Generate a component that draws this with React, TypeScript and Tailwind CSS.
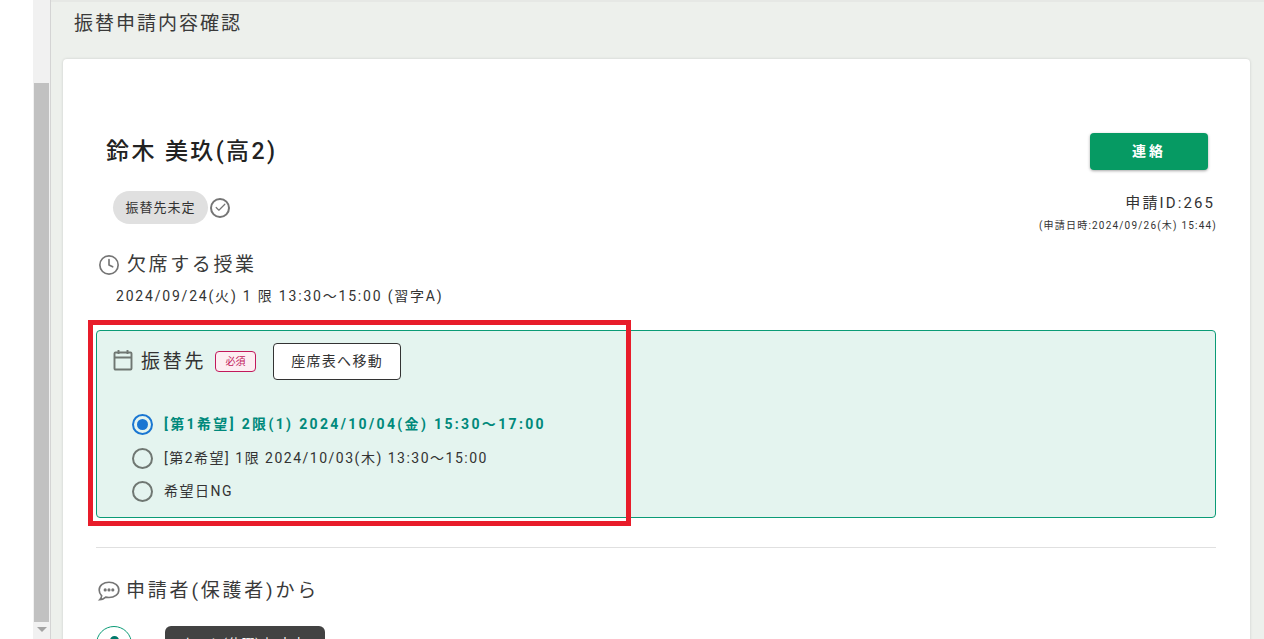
import { Check, Clock } from "lucide-react";

const sans = "font-['Roboto','Noto_Sans_CJK_JP',sans-serif]";

function RadioRow({ label, checked }: { label: string; checked?: boolean }) {
  return (
    <div className="flex h-[33.5px] items-center">
      <span
        className={
          "flex size-[21px] items-center justify-center rounded-full border-2 " +
          (checked ? "border-[#1976d2]" : "border-[#6f7772]")
        }
      >
        {checked && <span className="size-[11px] rounded-full bg-[#1976d2]" />}
      </span>
      <span
        className={
          "ml-[11px] text-[14px] " +
          (checked ? "font-bold tracking-[2.35px] text-[#00897b]" : "tracking-[1.5px] text-[#333333]")
        }
      >
        {label}
      </span>
    </div>
  );
}

export default function App() {
  return (
    <div className={"relative flex h-[639px] w-[1264px] overflow-hidden bg-white " + sans}>
      {/* page scrollbar */}
      <div className="ml-[33px] flex w-[18px] flex-col border-r border-[#d4d4d4] bg-[#f1f1f1]">
        <div className="mt-[83px] ml-[1px] h-[539px] w-[15px] bg-[#c1c1c1]" />
        <div className="ml-[4px] mt-[5px] h-0 w-0 border-x-[5px] border-t-[5px] border-x-transparent border-t-[#a3a3a3]" />
      </div>

      <main className="flex-1 border-t-2 border-[#e6e8e5] bg-[#edf0ec] pl-3 pr-[14px]">
        <h1 className="ml-[11px] mt-[9px] h-[48px] text-[19px] leading-[26px] tracking-[2px] text-[#3a3a3a]">
          振替申請内容確認
        </h1>

        <section className="h-[600px] rounded-t-[4px] bg-white pl-[33px] pr-[34px] shadow-[0_0_3px_rgba(0,0,0,0.15)]">
          <div className="flex h-[186px] items-start justify-between pt-[74px]">
            <div>
              <div className="ml-[10px] mt-[1px] text-[23px] font-medium leading-[36px] tracking-[2.4px] text-[#222222]">
                鈴木 美玖(高2)
              </div>
              <div className="ml-[17px] mt-[21px] flex items-center gap-[2px]">
                <span className="flex h-[33px] w-[95px] items-center justify-center rounded-full bg-[#e0e0e0] text-[13px] tracking-[1px] text-[#333333]">
                  振替先未定
                </span>
                <span className="flex size-[20px] items-center justify-center rounded-full border-2 border-[#757575]">
                  <Check size={13} strokeWidth={2.2} className="text-[#757575]" />
                </span>
              </div>
            </div>
            <div className="-mr-[1px] flex flex-col items-end">
              <button className="mr-[9px] h-[37px] w-[118px] rounded-[4px] bg-[#069a63] text-[14px] font-bold tracking-[3px] text-white shadow-[0_1px_3px_rgba(0,0,0,0.35)]">
                連絡
              </button>
              <div className="mr-[2px] mt-[22px] text-[15px] leading-[22px] tracking-[2.1px] text-[#333333]">
                申請ID:265
              </div>
              <div className="mt-[5px] text-[10px] leading-[14px] tracking-[1.2px] text-[#333333]">
                (申請日時:2024/09/26(木) 15:44)
              </div>
            </div>
          </div>

          <div className="mt-[6px] flex items-center">
            <Clock size={22} strokeWidth={1.8} className="ml-[2px] text-[#757575]" />
            <span className="ml-[7px] text-[19px] leading-[28px] tracking-[2.6px] text-[#3a3a3a]">欠席する授業</span>
          </div>
          <div className="ml-[20px] mt-[6px] text-[14px] leading-[22px] tracking-[1.8px] text-[#333333]">
            2024/09/24(火) 1 限 13:30〜15:00 (習字A)
          </div>

          <div className="mt-[23px] h-[188px] rounded-[4px] border border-[#0a9b76] bg-[#e4f4ef] pl-[16px]">
            <div className="flex items-center pt-[12px]">
              <svg width="20" height="22" viewBox="0 0 20 22" fill="none" stroke="#6f7772" strokeWidth="1.9" className="-mt-[3px]">
                <rect x="1.5" y="3.5" width="17" height="17" rx="1" />
                <path d="M1.5 8.5h17M5.5 1v4M14.5 1v4" />
              </svg>
              <span className="ml-[8px] text-[19px] leading-[36px] tracking-[2.7px] text-[#333333]">振替先</span>
              <span className="ml-[9px] flex h-[21px] w-[41px] items-center justify-center rounded-[4px] border border-[#c2185b] bg-[#fdeef2] text-[10px] text-[#c2185b]">
                必須
              </span>
              <button className="ml-[17px] h-[37px] w-[128px] rounded-[4px] border border-[#333333] bg-white text-[14px] tracking-[1.3px] text-[#333333]">
                座席表へ移動
              </button>
            </div>
            <div className="ml-[19px] mt-[28px]">
              <RadioRow checked label="[第1希望] 2限(1) 2024/10/04(金) 15:30〜17:00" />
              <RadioRow label="[第2希望] 1限 2024/10/03(木) 13:30〜15:00" />
              <RadioRow label="希望日NG" />
            </div>
          </div>

          <hr className="mt-[29px] border-[#e0e0e0]" />

          <div className="mt-[29px] flex items-center">
            <svg width="24" height="22" viewBox="0 0 22 20" fill="none" stroke="#757575" strokeWidth="1.5" className="ml-[1px]">
              <path d="M11 2c5 0 9 2.900 9 7s-4 7-9 7c-1.100 0-2.100-.1-3-.4C6.500 17 4.500 18 2.500 18c1-1 1.700-2.200 1.800-3.600C2.900 13 2 11.100 2 9c0-4.100 4-7 9-7z" />
              <circle cx="7.500" cy="9" r=".7" fill="#757575" />
              <circle cx="11" cy="9" r=".7" fill="#757575" />
              <circle cx="14.500" cy="9" r=".7" fill="#757575" />
            </svg>
            <span className="ml-[5px] text-[19px] leading-[28px] tracking-[2.8px] text-[#3a3a3a]">申請者(保護者)から</span>
          </div>

          <div className="mt-[21px] flex items-start">
            <span className="flex size-[36px] justify-center rounded-full border border-[#0a9b76] bg-white pt-[9px]">
              <span className="size-[9px] rounded-full bg-[#00796b]" />
            </span>
            <div className="ml-[33px] h-[40px] w-[160px] rounded-[6px] bg-[#424242] px-[16px] py-[8px] text-[13px] tracking-[0.8px] text-white">
              ホスト(休暇)中 未定
            </div>
          </div>
        </section>
      </main>

      {/* red annotation frame */}
      <div className="pointer-events-none absolute left-[88px] top-[320px] h-[206px] w-[543px] border-[5px] border-[#e81c2a]" />
    </div>
  );
}
